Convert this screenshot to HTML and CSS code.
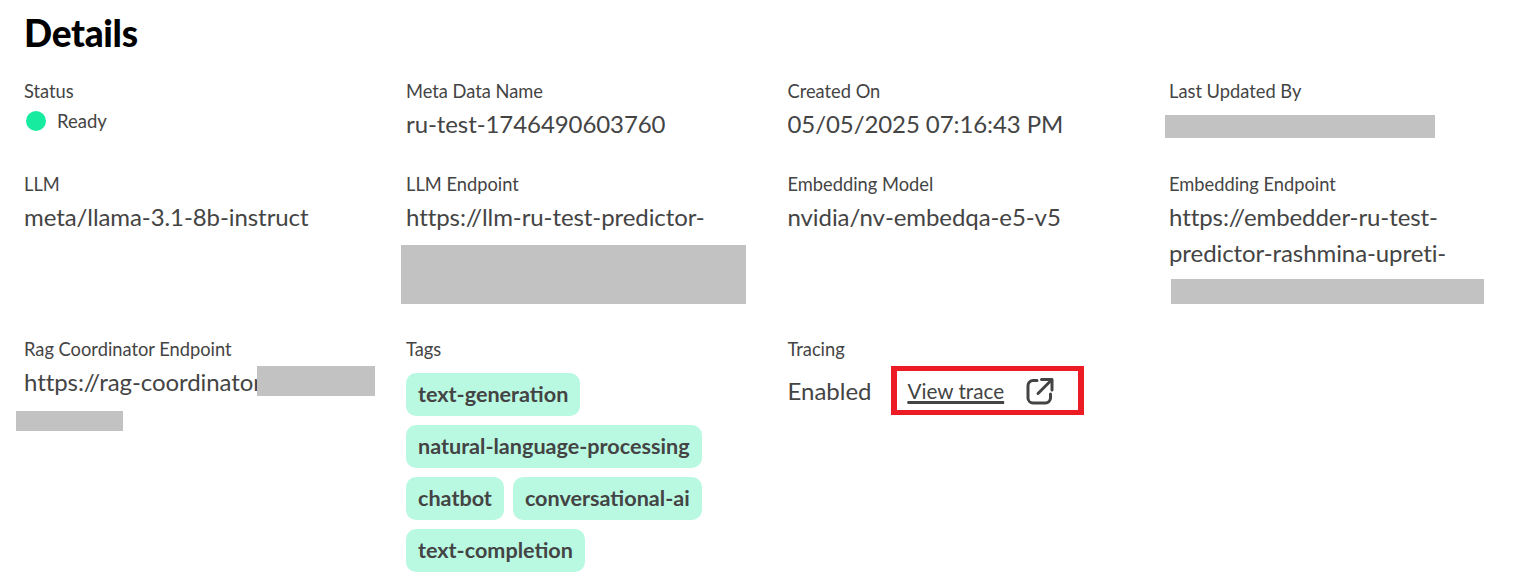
FILE: index.html
```html
<!DOCTYPE html>
<html lang="en">
<head>
<meta charset="utf-8">
<title>Details</title>
<link rel="stylesheet" href="styles.css">
</head>
<body>
<main class="page">
  <h1 class="title">Details</h1>
  <div class="grid">
    <section class="item row-one">
      <div class="label">Status</div>
      <div class="status"><span class="dot"></span><span>Ready</span></div>
    </section>
    <section class="item">
      <div class="label">Meta Data Name</div>
      <div class="value">ru-test-1746490603760</div>
    </section>
    <section class="item">
      <div class="label">Created On</div>
      <div class="value">05/05/2025 07:16:43 PM</div>
    </section>
    <section class="item">
      <div class="label">Last Updated By</div>
    </section>

    <section class="item row-two">
      <div class="label">LLM</div>
      <div class="value">meta/llama-3.1-8b-instruct</div>
    </section>
    <section class="item">
      <div class="label">LLM Endpoint</div>
      <div class="value">https://llm-ru-test-predictor-</div>
    </section>
    <section class="item">
      <div class="label">Embedding Model</div>
      <div class="value">nvidia/nv-embedqa-e5-v5</div>
    </section>
    <section class="item">
      <div class="label">Embedding Endpoint</div>
      <div class="value">https://embedder-ru-test-<br>predictor-rashmina-upreti-</div>
    </section>

    <section class="item">
      <div class="label">Rag Coordinator Endpoint</div>
      <div class="value">https://rag-coordinator</div>
    </section>
    <section class="item">
      <div class="label">Tags</div>
      <div class="tags">
        <span class="tag">text-generation</span>
        <span class="tag">natural-language-processing</span>
        <span class="tag">chatbot</span>
        <span class="tag">conversational-ai</span>
        <span class="tag">text-completion</span>
      </div>
    </section>
    <section class="item">
      <div class="label">Tracing</div>
      <div class="tracing">
        <span class="enabled">Enabled</span>
        <a class="trace" href="#"><span class="trace-text">View trace</span>
          <svg class="trace-icon" viewBox="0 0 28 28" width="28" height="28" fill="none" stroke="#444" stroke-width="3" stroke-linecap="round" stroke-linejoin="round" aria-hidden="true">
            <path d="M11 3.5H7a5 5 0 0 0-5 5v12.5a5 5 0 0 0 5 5h12.500a5 5 0 0 0 5-5v-4"/>
            <path d="M12 16.500 25.500 3"/>
            <path d="M15.500 2.500h10.500v10.500"/>
          </svg>
        </a>
      </div>
    </section>
  </div>
</main>
<div class="redact r-updated"></div>
<div class="redact r-llm"></div>
<div class="redact r-embed"></div>
<div class="redact r-rag1"></div>
<div class="redact r-rag2"></div>
</body>
</html>
```
FILE: styles.css
```css
html, body {
  margin: 0;
  padding: 0;
  background: #fff;
}
body {
  width: 1526px;
  height: 588px;
  overflow: hidden;
  position: relative;
  font-family: "Lato", "Liberation Sans", sans-serif;
  color: #444;
}
.page {
  padding: 13px 0 0 24px;
}
.title {
  margin: 0 0 26px;
  font-size: 37px;
  line-height: 40px;
  font-weight: 900;
  color: #000;
  letter-spacing: -0.3px;
}
.grid {
  display: grid;
  grid-template-columns: 382px 381.5px 381.5px 340px;
  grid-template-rows: 93px 165px auto;
}
.label {
  font-size: 18.3px;
  line-height: 24px;
  color: #444;
}
.value {
  margin-top: 3px;
  font-size: 24px;
  line-height: 36px;
  letter-spacing: -0.08px;
  color: #444;
}
.status {
  display: flex;
  align-items: center;
  gap: 11px;
  margin: 6px 0 0 2px;
  font-size: 18.5px;
  line-height: 24px;
}
.dot {
  width: 20px;
  height: 20px;
  border-radius: 50%;
  background: #17eba0;
}
.tags {
  display: flex;
  flex-wrap: wrap;
  gap: 9px;
  margin-top: 12px;
  width: 310px;
}
.tag {
  padding: 0 12px;
  height: 43px;
  line-height: 43px;
  border-radius: 10px;
  background: #b9f9e2;
  font-size: 21.6px;
  font-weight: 700;
  color: #444;
  white-space: nowrap;
}
.tracing {
  display: flex;
  align-items: center;
  margin-top: 5px;
}
.enabled {
  font-size: 24px;
  line-height: 45px;
  width: 103px;
}
.trace {
  box-sizing: border-box;
  width: 193px;
  height: 49px;
  border: solid #ed1c24;
  border-width: 5px 6px;
  display: flex;
  align-items: center;
  padding-left: 11px;
  color: #444;
  font-size: 20.7px;
}
.trace-text {
  text-decoration: underline;
  text-underline-offset: 3px;
  width: 118px;
}
.trace-icon {
  flex: none;
}
.redact {
  position: absolute;
  background: #c2c2c2;
}
.r-updated { left: 1165px; top: 115px; width: 270px; height: 23px; }
.r-llm { left: 401px; top: 245px; width: 345px; height: 59px; }
.r-embed { left: 1171px; top: 279px; width: 313px; height: 25px; }
.r-rag1 { left: 257px; top: 366px; width: 118px; height: 30px; }
.r-rag2 { left: 16px; top: 411px; width: 107px; height: 20px; }
```
